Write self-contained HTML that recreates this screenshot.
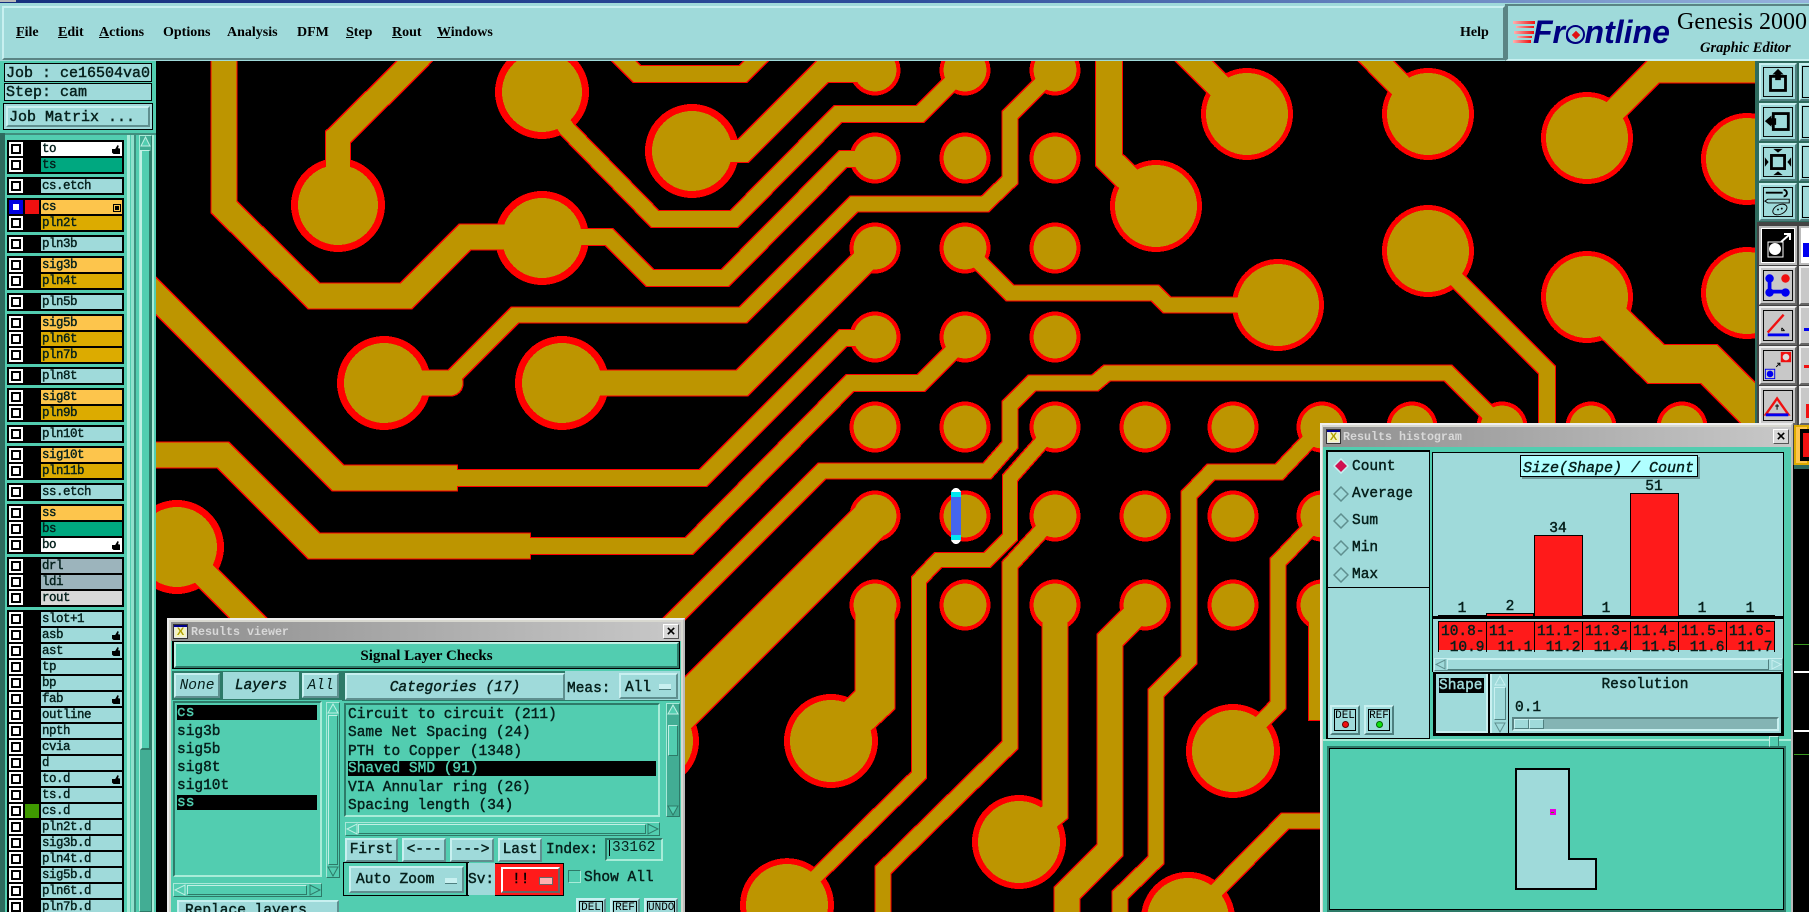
<!DOCTYPE html>
<html><head><meta charset="utf-8"><title>Genesis 2000</title>
<style>
html,body{margin:0;padding:0;width:1809px;height:912px;overflow:hidden;background:#000}
div{position:absolute;box-sizing:border-box;white-space:pre}
svg{position:absolute;display:block}
#root{left:0;top:0;width:1809px;height:912px;overflow:hidden;background:#000}
.m{font-family:"Liberation Mono",monospace;font-weight:normal;-webkit-text-stroke:.45px currentColor;font-size:14.5px;color:#06201c}
.s{font-family:"Liberation Serif",serif;font-weight:bold;font-size:14px;color:#000}
.u{background:#9fdada;border:2px solid;border-color:#c8f0f0 #5f8f8f #5f8f8f #c8f0f0;text-align:center}
.g{left:7px;width:117px;background:#000;padding-top:2px;overflow:hidden}
.g,.g div{white-space:normal}
.g div{position:relative}
.r{height:16px;width:117px}
.c{position:absolute!important;left:2px;top:0;width:14px;height:14px;background:#fff}
.c::after{content:"";position:absolute;left:2px;top:2px;width:10px;height:10px;box-sizing:border-box;border:2px solid #000;background:#fff}
.c.b{background:#0000e0}.c.b::after{border-color:#0000e0}
.l{position:absolute!important;left:34px;top:0;width:81px;height:14px;background:#9fdada;font:normal 12.5px/15px "Liberation Mono",monospace;-webkit-text-stroke:.4px #04201c;letter-spacing:-.5px;color:#04201c;padding-left:1px;overflow:hidden}
.w1{background:#fff}.w2{background:#00a880}.o1{background:#fdc54c}.o2{background:#dcab00}.gr{background:#9cb4bc}.lg{background:#d8d8d8}
.h{position:absolute!important;right:2px;top:3px;width:8px;height:9px;background:#000;clip-path:polygon(0 45%,40% 45%,70% 0,85% 10%,75% 35%,100% 40%,100% 100%,20% 100%,0 85%)}
.q{background:#9fdada;border:2px solid;border-color:#c8f0f0 #4f7f7f #4f7f7f #c8f0f0}
.q>svg{left:2px;top:2px;width:30px;height:30px}
.t{background:#c8c8c8;border:2px solid;border-color:#eee #666 #666 #eee}
.t>svg{left:2px;top:2px;width:30px;height:31px}
.ti{background:linear-gradient(90deg,#8f8f8f,#c8c8c8);color:#d8d8d8;font:bold 11.67px/18px "Liberation Mono",monospace}
.x{background:#d8d8d8;border:1px solid;border-color:#fff #555 #555 #fff;color:#000;font:bold 15px/13px "Liberation Sans",sans-serif;text-align:center}
.ic{background:#e8e8e8;border:1px solid #333}
.ic::before{content:"";position:absolute;left:0;top:0;width:13px;height:2px;background:#00008a}
.ic::after{content:"X";position:absolute;left:1px;top:3px;width:11px;height:9px;background:#f4f4c0;color:#b0a000;font:bold 11px/9px "Liberation Sans",sans-serif;text-align:center}
.sel{background:#000;color:#52cdb0}
.tr{background:#42ad94;border:1px solid;border-color:#a8e8d8 #2d7a68 #2d7a68 #a8e8d8}
.th{background:#52cdb0;border:1px solid;border-color:#c0f0e4 #2d7a68 #2d7a68 #c0f0e4}
.cell{top:621px;width:49px;height:31px;background:linear-gradient(#ff1a1a 28px,#9fdada 28px);overflow:hidden;border:1px solid #000;border-bottom:0;line-height:16px;padding:2px 0 0 2px}
</style></head>
<body>
<div id="root">
<!-- board -->
<svg style="left:156px;top:61px" width="1601" height="851" viewBox="156 61 1601 851" shape-rendering="crispEdges">
<defs><filter id="o" filterUnits="userSpaceOnUse" x="156" y="61" width="1601" height="851" color-interpolation-filters="sRGB">
<feMorphology in="SourceAlpha" operator="dilate" radius="1" result="d"/>
<feFlood flood-color="#ff0000"/><feComposite in2="d" operator="in" result="r"/>
<feMerge><feMergeNode in="r"/><feMergeNode in="SourceGraphic"/></feMerge></filter></defs>
<rect x="156" y="61" width="1601" height="851" fill="#000"/>
<g fill="#ff0000">
<circle cx="338" cy="205" r="47"/><circle cx="542" cy="92" r="47"/><circle cx="692" cy="151" r="47"/><circle cx="542" cy="238" r="47"/><circle cx="384" cy="383" r="47"/><circle cx="562" cy="383" r="47"/><circle cx="177" cy="547" r="47"/>
<circle cx="1247" cy="114" r="46"/><circle cx="1428" cy="114" r="46"/><circle cx="1587" cy="138" r="46"/><circle cx="1747" cy="159" r="46"/><circle cx="1156" cy="206" r="46"/><circle cx="1428" cy="251" r="46"/><circle cx="1278" cy="305" r="46"/><circle cx="1587" cy="297" r="46"/><circle cx="1747" cy="293" r="46"/>
<circle cx="831" cy="741" r="47"/><circle cx="1019" cy="842" r="47"/><circle cx="1233" cy="751" r="47"/><path d="M740.5 912A47 47 0 1 1 833.5 912Z"/><path d="M1141.5 912A47 47 0 0 1 1234.5 912Z"/><circle cx="652" cy="741" r="47"/>
<circle cx="875" cy="70" r="25.5"/><circle cx="875" cy="158" r="25.5"/><circle cx="875" cy="248" r="25.5"/><circle cx="875" cy="337" r="25.5"/><circle cx="875" cy="427" r="25.5"/><circle cx="875" cy="516" r="25.5"/><circle cx="875" cy="605" r="25.5"/>
<circle cx="965" cy="70" r="25.5"/><circle cx="965" cy="158" r="25.5"/><circle cx="965" cy="248" r="25.5"/><circle cx="965" cy="337" r="25.5"/><circle cx="965" cy="427" r="25.5"/><circle cx="965" cy="516" r="25.5"/><circle cx="965" cy="605" r="25.5"/>
<circle cx="1055" cy="70" r="25.5"/><circle cx="1055" cy="158" r="25.5"/><circle cx="1055" cy="248" r="25.5"/><circle cx="1055" cy="337" r="25.5"/><circle cx="1055" cy="427" r="25.5"/><circle cx="1055" cy="516" r="25.5"/><circle cx="1055" cy="605" r="25.5"/>
<circle cx="1145" cy="427" r="25.5"/><circle cx="1145" cy="516" r="25.5"/><circle cx="1145" cy="605" r="25.5"/>
<circle cx="1233" cy="427" r="25.5"/><circle cx="1233" cy="516" r="25.5"/><circle cx="1233" cy="605" r="25.5"/>
<circle cx="1322" cy="427" r="25.5"/><circle cx="1322" cy="516" r="25.5"/><circle cx="1322" cy="605" r="25.5"/>
<circle cx="1412" cy="427" r="25.5"/><circle cx="1502" cy="427" r="25.5"/><circle cx="1591" cy="427" r="25.5"/><circle cx="1682" cy="427" r="25.5"/>
</g>
<g filter="url(#o)">
<g fill="none" stroke="#bd9500" stroke-linejoin="miter">
<polyline stroke-width="25" points="224,50 224,207 314,296 406,296 465,237 542,237"/>
<polyline stroke-width="24" points="338,205 338,137 415,61 425,50"/>
<polyline stroke-width="16" points="542,92 567,129 655,219 734,219 838,114 920,114 965,69"/>
<polyline stroke-width="16" points="609,46 637,74 743,74 771,46"/>
<polyline stroke-width="22" points="692,151 743,151 823,71 875,71"/>
<polyline stroke-width="16" points="875,159 843,159 725,278 650,278 609,237 542,237"/>
<polyline stroke-width="15" points="1055,70 1010,115 1010,180 985,204 854,204 743,315 515,315 452,378"/>
<polyline stroke-width="25" stroke-linecap="round" points="384,383 450,383"/>
<polyline stroke-width="25" points="562,383 742,383 864,261 875,250"/>
<polyline stroke-width="16" points="875,338 843,338 703,478 457,478"/>
<polyline stroke-width="25" points="457,478 338,478 145,285"/>
<polyline stroke-width="25" points="145,455 223,455 314,546 530,546"/>
<polyline stroke-width="16" points="530,546 689,546 850,383 921,383 965,339"/>
<polyline stroke-width="25" points="177,547 270,640"/>
<polyline stroke-width="26" points="1109,50 1109,160 1156,206"/>
<polyline stroke-width="25" points="1183,50 1194,61 1247,114"/>
<polyline stroke-width="24" points="1365,50 1376,61 1428,114"/>
<polyline stroke-width="23" points="1587,138 1654,71 1770,71"/>
<polyline stroke-width="15" points="965,248 1010,293 1155,293 1167,305 1278,305"/>
<polyline stroke-width="16" points="1428,251 1547,370 1547,440"/>
<polyline stroke-width="38" points="1587,297 1656,364 1709,364 1770,425"/>
<polyline stroke-width="15" points="1502,427 1448,373 1107,373 1095,383 1032,383 1010,405 1010,445 987,471 822,471 600,693"/>
<polyline stroke-width="14" points="1055,427 1010,478 1010,537 987,560 938,560 919,580 919,775 787,905"/>
<polyline stroke-width="15" points="1055,516 1010,565 1010,745 883,870 883,912"/>
<polyline stroke-width="40" points="875,516 652,739"/>
<polyline stroke-width="39" points="875,605 875,700 831,741"/>
<polyline stroke-width="25" points="1055,605 1055,812 1019,842"/>
<polyline stroke-width="25" points="1145,605 1110,640 1110,850 1067,893 1067,912"/>
<polyline stroke-width="15" points="1322,427 1279,472 1211,472 1189,495 1189,660 1156,693 1156,860 1120,895 1120,912"/>
<polyline stroke-width="15" points="1322,516 1278,562 1278,705 1233,751"/>
<polyline stroke-width="26" points="1322,605 1322,720"/>
<polyline stroke-width="15" points="1195,912 1285,821 1330,821"/>
</g>
<g fill="#bd9500">
<circle cx="338" cy="205" r="40"/><circle cx="542" cy="92" r="40"/><circle cx="692" cy="151" r="40"/><circle cx="542" cy="238" r="40"/><circle cx="384" cy="383" r="40"/><circle cx="562" cy="383" r="40"/><circle cx="177" cy="547" r="40"/>
<circle cx="1247" cy="114" r="41"/><circle cx="1428" cy="114" r="41"/><circle cx="1587" cy="138" r="41"/><circle cx="1747" cy="159" r="41"/><circle cx="1156" cy="206" r="41"/><circle cx="1428" cy="251" r="41"/><circle cx="1278" cy="305" r="41"/><circle cx="1587" cy="297" r="41"/><circle cx="1747" cy="293" r="41"/>
<circle cx="831" cy="741" r="41"/><circle cx="1019" cy="842" r="41"/><circle cx="1233" cy="751" r="41"/><path d="M746.6 912A41 41 0 1 1 827.4 912Z"/><path d="M1147.6 912A41 41 0 0 1 1228.4 912Z"/><circle cx="652" cy="741" r="41"/>
<circle cx="875" cy="70" r="21.5"/><circle cx="875" cy="158" r="21.5"/><circle cx="875" cy="248" r="21.5"/><circle cx="875" cy="337" r="21.5"/><circle cx="875" cy="427" r="21.5"/><circle cx="875" cy="516" r="21.5"/><circle cx="875" cy="605" r="21.5"/>
<circle cx="965" cy="70" r="21.5"/><circle cx="965" cy="158" r="21.5"/><circle cx="965" cy="248" r="21.5"/><circle cx="965" cy="337" r="21.5"/><circle cx="965" cy="427" r="21.5"/><circle cx="965" cy="516" r="21.5"/><circle cx="965" cy="605" r="21.5"/>
<circle cx="1055" cy="70" r="21.5"/><circle cx="1055" cy="158" r="21.5"/><circle cx="1055" cy="248" r="21.5"/><circle cx="1055" cy="337" r="21.5"/><circle cx="1055" cy="427" r="21.5"/><circle cx="1055" cy="516" r="21.5"/><circle cx="1055" cy="605" r="21.5"/>
<circle cx="1145" cy="427" r="21.5"/><circle cx="1145" cy="516" r="21.5"/><circle cx="1145" cy="605" r="21.5"/>
<circle cx="1233" cy="427" r="21.5"/><circle cx="1233" cy="516" r="21.5"/><circle cx="1233" cy="605" r="21.5"/>
<circle cx="1322" cy="427" r="21.5"/><circle cx="1322" cy="516" r="21.5"/><circle cx="1322" cy="605" r="21.5"/>
<circle cx="1412" cy="427" r="21.5"/><circle cx="1502" cy="427" r="21.5"/><circle cx="1591" cy="427" r="21.5"/><circle cx="1682" cy="427" r="21.5"/>
</g>
</g>
<rect x="951" y="488" width="10" height="56" rx="5" fill="#fff"/>
<rect x="951" y="492" width="10" height="48" fill="#00e8f0"/>
<rect x="951" y="497" width="10" height="38" fill="#4466ee"/>
</svg>

<!-- top -->
<div style="left:0;top:0;width:1809px;height:6px;background:linear-gradient(90deg,#15307e,#2e4e9c 50%,#96b2dc)"></div>
<div style="left:0;top:0;width:16px;height:2px;background:#b8b8b8"></div>
<div style="left:0;top:3px;width:1809px;height:58px;background:#9fdada"></div>
<div style="left:2px;top:6px;width:1503px;height:54px;background:#9fdada;border:2px solid;border-color:#c8f0f0 #5a8484 #5a8484 #c8f0f0"></div>
<div style="left:1505px;top:4px;width:304px;height:57px;background:#9fdada;border-left:3px solid #5a8484;border-top:2px solid #5a8484;border-bottom:2px solid #c8f0f0"></div>
<div class="s" style="left:16px;top:25px"><u>F</u>ile</div>
<div class="s" style="left:58px;top:25px"><u>E</u>dit</div>
<div class="s" style="left:99px;top:25px"><u>A</u>ctions</div>
<div class="s" style="left:163px;top:25px">Options</div>
<div class="s" style="left:227px;top:25px">Analysis</div>
<div class="s" style="left:297px;top:25px">DFM</div>
<div class="s" style="left:346px;top:25px"><u>S</u>tep</div>
<div class="s" style="left:392px;top:25px"><u>R</u>out</div>
<div class="s" style="left:437px;top:25px"><u>W</u>indows</div>
<div class="s" style="left:1460px;top:25px">Help</div>
<!-- logo -->
<div style="left:1513px;top:21px;width:22px;height:3px;background:linear-gradient(90deg,#ffb0b0,#f01010)"></div>
<div style="left:1516px;top:26px;width:18px;height:2px;background:linear-gradient(90deg,#ffb0b0,#f01010)"></div>
<div style="left:1514px;top:31px;width:20px;height:3px;background:linear-gradient(90deg,#ffb0b0,#f01010)"></div>
<div style="left:1517px;top:36px;width:15px;height:2px;background:linear-gradient(90deg,#ffb0b0,#f01010)"></div>
<div style="left:1513px;top:40px;width:18px;height:3px;background:linear-gradient(90deg,#ffb0b0,#f01010)"></div>
<div style="left:1533px;top:14px;font:italic bold 32px/36px 'Liberation Sans',sans-serif;color:#000080;letter-spacing:0">Frontline</div>
<div style="left:1566px;top:25px;width:19px;height:19px;border-radius:50%;background:#9fdada;border:2.5px solid #000080"></div>
<div style="left:1572.5px;top:31.5px;width:6px;height:6px;background:#e01010;transform:rotate(45deg)"></div>
<div style="left:1677px;top:8px;font:24px/28px 'Liberation Serif',serif;color:#000">Genesis 2000</div>
<div style="left:1700px;top:39px;font:italic bold 14.5px/18px 'Liberation Serif',serif;color:#000">Graphic Editor</div>

<!-- left panel -->
<div style="left:0;top:61px;width:156px;height:851px;background:#52cdb0"></div>
<div style="left:0;top:133px;width:5px;height:779px;background:#2e6b5e"></div>
<div style="left:5px;top:133px;width:151px;height:2px;background:#3f8f7e"></div>
<div style="left:4px;top:63px;width:148px;height:19px;background:#9fdada;border:1px solid #000"></div>
<div style="left:4px;top:83px;width:148px;height:18px;background:#9fdada;border:1px solid #000"></div>
<div class="m" style="left:6px;top:64px;font-size:15px;line-height:19px">Job : ce16504va0</div>
<div class="m" style="left:6px;top:83px;font-size:15px;line-height:20px">Step: cam</div>
<div style="left:3px;top:103px;width:150px;height:27px;background:#9fdada;border:1px solid #000"></div>
<div class="u" style="left:6px;top:106px;width:144px;height:21px"></div>
<div class="m" style="left:9px;top:108px;font-size:15px;line-height:19px">Job Matrix ...</div>

<div class="g" style="top:140px;height:34px"><div class="r"><i class="c"></i><div class="l w1">to<i class="h"></i></div></div><div class="r"><i class="c"></i><div class="l w2">ts</div></div></div>
<div class="g" style="top:177px;height:18px"><div class="r"><i class="c"></i><div class="l">cs.etch</div></div></div>
<div class="g" style="top:198px;height:34px"><div class="r"><i class="c b"></i><div style="position:absolute;left:18px;top:0;width:14px;height:14px;background:#f01010"></div><div class="l o1">cs<span style="position:absolute;right:1px;top:4px;width:6px;height:6px;background:#000;border:1px solid #000;box-shadow:inset 0 0 0 1px #fdc54c"></span></div></div><div class="r"><i class="c"></i><div class="l o2">pln2t</div></div></div>
<div class="g" style="top:235px;height:18px"><div class="r"><i class="c"></i><div class="l">pln3b</div></div></div>
<div class="g" style="top:256px;height:34px"><div class="r"><i class="c"></i><div class="l o1">sig3b</div></div><div class="r"><i class="c"></i><div class="l o2">pln4t</div></div></div>
<div class="g" style="top:293px;height:18px"><div class="r"><i class="c"></i><div class="l">pln5b</div></div></div>
<div class="g" style="top:314px;height:50px"><div class="r"><i class="c"></i><div class="l o1">sig5b</div></div><div class="r"><i class="c"></i><div class="l o2">pln6t</div></div><div class="r"><i class="c"></i><div class="l o2">pln7b</div></div></div>
<div class="g" style="top:367px;height:18px"><div class="r"><i class="c"></i><div class="l">pln8t</div></div></div>
<div class="g" style="top:388px;height:34px"><div class="r"><i class="c"></i><div class="l o1">sig8t</div></div><div class="r"><i class="c"></i><div class="l o2">pln9b</div></div></div>
<div class="g" style="top:425px;height:18px"><div class="r"><i class="c"></i><div class="l">pln10t</div></div></div>
<div class="g" style="top:446px;height:34px"><div class="r"><i class="c"></i><div class="l o1">sig10t</div></div><div class="r"><i class="c"></i><div class="l o2">pln11b</div></div></div>
<div class="g" style="top:483px;height:18px"><div class="r"><i class="c"></i><div class="l">ss.etch</div></div></div>
<div class="g" style="top:504px;height:50px"><div class="r"><i class="c"></i><div class="l o1">ss</div></div><div class="r"><i class="c"></i><div class="l w2">bs</div></div><div class="r"><i class="c"></i><div class="l w1">bo<i class="h"></i></div></div></div>
<div class="g" style="top:557px;height:50px"><div class="r"><i class="c"></i><div class="l gr">drl</div></div><div class="r"><i class="c"></i><div class="l gr">ldi</div></div><div class="r"><i class="c"></i><div class="l lg">rout</div></div></div>
<div class="g" style="top:610px;height:302px">
<div class="r"><i class="c"></i><div class="l">slot+1</div></div>
<div class="r"><i class="c"></i><div class="l">asb<i class="h"></i></div></div>
<div class="r"><i class="c"></i><div class="l">ast<i class="h"></i></div></div>
<div class="r"><i class="c"></i><div class="l">tp</div></div>
<div class="r"><i class="c"></i><div class="l">bp</div></div>
<div class="r"><i class="c"></i><div class="l">fab<i class="h"></i></div></div>
<div class="r"><i class="c"></i><div class="l">outline</div></div>
<div class="r"><i class="c"></i><div class="l">npth</div></div>
<div class="r"><i class="c"></i><div class="l">cvia</div></div>
<div class="r"><i class="c"></i><div class="l">d</div></div>
<div class="r"><i class="c"></i><div class="l">to.d<i class="h"></i></div></div>
<div class="r"><i class="c"></i><div class="l">ts.d</div></div>
<div class="r"><i class="c"></i><div style="position:absolute;left:18px;top:0;width:14px;height:14px;background:#3f9a00"></div><div class="l">cs.d</div></div>
<div class="r"><i class="c"></i><div class="l">pln2t.d</div></div>
<div class="r"><i class="c"></i><div class="l">sig3b.d</div></div>
<div class="r"><i class="c"></i><div class="l">pln4t.d</div></div>
<div class="r"><i class="c"></i><div class="l">sig5b.d</div></div>
<div class="r"><i class="c"></i><div class="l">pln6t.d</div></div>
<div class="r" style="height:12px"><i class="c" style="height:12px"></i><div class="l" style="height:12px">pln7b.d</div></div>
</div>
<div style="left:127px;top:135px;width:3px;height:777px;background:#a8ecd8"></div>
<div style="left:130px;top:135px;width:1px;height:777px;background:#52cdb0"></div>
<div style="left:131px;top:135px;width:3px;height:777px;background:#8fe0cc"></div>
<div style="left:134px;top:135px;width:2px;height:777px;background:#3d8f7e"></div>
<div style="left:139px;top:135px;width:13px;height:777px;background:#42ad94;border:1px solid;border-color:#a8ecd8 #2d7a68 #2d7a68 #a8ecd8"></div>
<div style="left:152px;top:135px;width:2px;height:777px;background:#a8ecd8"></div>
<div class="th" style="left:140px;top:150px;width:11px;height:600px;border-width:1px 2px 2px 2px"></div>
<svg style="left:140px;top:136px" width="11" height="12"><polygon points="5.5,1 10,10 1,10" fill="#52cdb0" stroke="#c0f0e4"/></svg>

<!-- toolbar -->
<div style="left:1755px;top:61px;width:54px;height:404px;background:#2e6b5e"></div>
<div style="left:1757px;top:222px;width:52px;height:243px;background:#444"></div>
<div class="q" style="left:1759px;top:63px;width:38px;height:38px"><svg viewBox="0 0 32 32"><rect x=".5" y=".5" width="31" height="31" fill="none" stroke="#000"/><rect x="8" y="10" width="16" height="15" fill="none" stroke="#000" stroke-width="3"/><polygon points="16,2 22,8 19,8 19,14 13,14 13,8 10,8" fill="#000"/></svg></div>
<div class="q" style="left:1759px;top:103px;width:38px;height:38px"><svg viewBox="0 0 32 32"><rect x=".5" y=".5" width="31" height="31" fill="none" stroke="#000"/><rect x="11" y="7" width="16" height="17" fill="none" stroke="#000" stroke-width="3"/><polygon points="2,15 9,9 9,12 14,12 14,19 9,19 9,21" fill="#000"/></svg></div>
<div class="q" style="left:1759px;top:143px;width:38px;height:38px"><svg viewBox="0 0 32 32"><rect x=".5" y=".5" width="31" height="31" fill="none" stroke="#000"/><rect x="9" y="9" width="14" height="14" fill="none" stroke="#000" stroke-width="3"/><polygon points="16,6 11,2 21,2" fill="#000"/><polygon points="16,26 11,30 21,30" fill="#000"/><polygon points="6,16 2,11 2,21" fill="#000"/><polygon points="26,16 30,11 30,21" fill="#000"/></svg></div>
<div class="q" style="left:1759px;top:183px;width:38px;height:38px"><svg viewBox="0 0 32 32"><rect x=".5" y=".5" width="31" height="31" fill="none" stroke="#000"/><path d="M3 6H21M22 3a3 3 0 1 1 0 7" fill="none" stroke="#000" stroke-width="2"/><path d="M5 13H28V17H5L2 15Z" fill="none" stroke="#000"/><ellipse cx="18" cy="24" rx="8" ry="5" transform="rotate(-25 18 24)" fill="none" stroke="#000"/><circle cx="16" cy="24" r="1"/><circle cx="20" cy="23" r="1"/></svg></div>
<div style="left:1759px;top:226px;width:38px;height:39px;background:#fff;border:2px solid #bbb"></div>
<svg style="left:1762px;top:229px" width="32" height="33" viewBox="0 0 32 33"><rect width="32" height="33" fill="#000"/><rect x="6" y="13" width="15" height="15" fill="none" stroke="#fff"/><circle cx="13" cy="20" r="6" fill="#fff"/><path d="M19 13L27 6M22 5H28V11" fill="none" stroke="#fff" stroke-width="2"/></svg>
<div class="t" style="left:1759px;top:266px;width:38px;height:39px"><svg viewBox="0 0 32 33"><rect x=".5" y=".5" width="31" height="32" fill="none" stroke="#000"/><path d="M7 9V23H22" stroke="#0000f0" stroke-width="4" fill="none"/><circle cx="7" cy="9" r="4.5" fill="#0000f0"/><circle cx="7" cy="24" r="4.5" fill="#0000f0"/><circle cx="24" cy="24" r="4.5" fill="#0000f0"/><circle cx="24" cy="9" r="4.5" fill="#f01010"/></svg></div>
<div class="t" style="left:1759px;top:306px;width:38px;height:39px"><svg viewBox="0 0 32 33"><rect x=".5" y=".5" width="31" height="32" fill="none" stroke="#000"/><path d="M5 24L22 5" stroke="#f01010" stroke-width="2.5"/><rect x="5" y="25" width="23" height="3" fill="#0000f0"/><path d="M20 19l3 3M20 19v3h3" stroke="#000" fill="none"/></svg></div>
<div class="t" style="left:1759px;top:346px;width:38px;height:39px"><svg viewBox="0 0 32 33"><rect x=".5" y=".5" width="31" height="32" fill="none" stroke="#000"/><rect x="19" y="2" width="11" height="11" fill="#f01010"/><circle cx="24.5" cy="7.5" r="3.5" fill="#ddd"/><rect x="2.5" y="20.5" width="10" height="10" fill="none" stroke="#0000f0"/><circle cx="7.5" cy="25.5" r="3.5" fill="#0000f0"/><path d="M14 18l4-4M15 14h3v3" stroke="#000" fill="none"/></svg></div>
<div class="t" style="left:1759px;top:386px;width:38px;height:39px"><svg viewBox="0 0 32 33"><rect x=".5" y=".5" width="31" height="32" fill="none" stroke="#000"/><path d="M3 26L15 9L27 26Z" fill="none" stroke="#f01010" stroke-width="2.5"/><rect x="3" y="25" width="24" height="3" fill="#0000f0"/><path d="M15 15v6M13 17h4" stroke="#000"/></svg></div>
<div class="q" style="left:1799px;top:63px;width:10px;height:38px;border-right:0"></div>
<div class="q" style="left:1799px;top:103px;width:10px;height:38px;border-right:0"></div>
<div class="q" style="left:1799px;top:143px;width:10px;height:38px;border-right:0"></div>
<div class="q" style="left:1799px;top:183px;width:10px;height:38px;border-right:0"></div>
<div style="left:1802px;top:66px;width:7px;height:32px;border:1px solid #000;border-right:0"></div>
<div style="left:1802px;top:106px;width:7px;height:32px;border:1px solid #000;border-right:0"></div>
<div style="left:1802px;top:146px;width:7px;height:32px;border:1px solid #000;border-right:0"></div>
<div style="left:1802px;top:186px;width:7px;height:32px;border:1px solid #000;border-right:0"></div>
<div style="left:1799px;top:226px;width:10px;height:39px;background:#fff;border:2px solid #bbb;border-right:0"></div>
<div style="left:1803px;top:243px;width:6px;height:14px;background:#0000f0"></div>
<div class="t" style="left:1799px;top:266px;width:10px;height:39px;border-right:0"></div>
<div class="t" style="left:1799px;top:306px;width:10px;height:39px;border-right:0"></div>
<div class="t" style="left:1799px;top:346px;width:10px;height:39px;border-right:0"></div>
<div class="t" style="left:1799px;top:386px;width:10px;height:39px;border-right:0"></div>
<div style="left:1804px;top:328px;width:5px;height:3px;background:#0000f0"></div>
<div style="left:1804px;top:365px;width:5px;height:3px;background:#f01010"></div>
<div style="left:1806px;top:404px;width:3px;height:14px;background:#f01010"></div>
<div style="left:1794px;top:425px;width:15px;height:40px;background:#fdc54c;border:2px solid #dcab00;padding:0"></div>
<div style="left:1800px;top:429px;width:9px;height:32px;background:#000"></div>
<div style="left:1803px;top:433px;width:6px;height:24px;background:#f01010"></div>
<div style="left:1794px;top:465px;width:15px;height:4px;background:#2e6b5e"></div>
<div style="left:1794px;top:644px;width:15px;height:1px;background:#3a9a20"></div>
<div style="left:1794px;top:671px;width:15px;height:2px;background:#fff"></div>
<div style="left:1794px;top:730px;width:15px;height:2px;background:#fff"></div>
<div style="left:1794px;top:754px;width:15px;height:1px;background:#3a9a20"></div>

<!-- results viewer -->
<div style="left:167px;top:618px;width:518px;height:294px;background:#d8d8d0;border:2px solid #eee;border-right-color:#bbb;border-bottom:0"></div>
<div style="left:171px;top:622px;width:510px;height:290px;background:#52cdb0"></div>
<div class="ti" style="left:171px;top:622px;width:510px;height:19px;padding-left:20px;line-height:20px">Results viewer</div>
<div class="ic" style="left:173px;top:624px;width:15px;height:15px"></div>
<div class="x" style="left:663px;top:624px;width:16px;height:15px">×</div>
<div style="left:172px;top:641px;width:508px;height:28px;background:#000"></div>
<div style="left:174px;top:642px;width:505px;height:26px;background:#52cdb0;border:2px solid;border-color:#c0f0e4 #2d7a68 #2d7a68 #c0f0e4"></div>
<div style="left:174px;top:646px;width:505px;text-align:center;font:bold 15px/20px 'Liberation Serif',serif;color:#000">Signal Layer Checks</div>

<div style="left:172px;top:671px;width:170px;height:29px;background:#2d7a68"></div>
<div class="u m" style="left:174px;top:673px;width:46px;height:25px;font-style:italic;-webkit-text-stroke:0;line-height:23px">None</div>
<div class="m" style="left:223px;top:672px;width:76px;height:27px;background:#9fdada;font-style:italic;line-height:28px;text-align:center">Layers</div>
<div class="u m" style="left:302px;top:673px;width:37px;height:25px;font-style:italic;-webkit-text-stroke:0;line-height:23px">All</div>
<div style="left:173px;top:701px;width:149px;height:176px;background:#52cdb0;border:2px solid;border-color:#2d7a68 #a8ecd8 #a8ecd8 #2d7a68"></div>
<div class="m sel" style="left:177px;top:705px;width:140px;height:15px;line-height:17px;overflow:hidden">cs</div>
<div class="m" style="left:177px;top:723px;line-height:18px">sig3b</div>
<div class="m" style="left:177px;top:741px;line-height:18px">sig5b</div>
<div class="m" style="left:177px;top:759px;line-height:18px">sig8t</div>
<div class="m" style="left:177px;top:777px;line-height:18px">sig10t</div>
<div class="m sel" style="left:177px;top:795px;width:140px;height:15px;line-height:17px;overflow:hidden">ss</div>
<div class="tr" style="left:326px;top:702px;width:14px;height:176px;background:#52cdb0"></div>
<div class="th" style="left:328px;top:715px;width:10px;height:150px"></div>
<svg style="left:327px;top:703px" width="12" height="11"><polygon points="6,1 11,10 1,10" fill="#52cdb0" stroke="#c0f0e4"/></svg>
<svg style="left:327px;top:866px" width="12" height="11"><polygon points="6,10 11,1 1,1" fill="#52cdb0" stroke="#2d7a68"/></svg>
<div class="tr" style="left:173px;top:883px;width:149px;height:14px;background:#52cdb0"></div>
<div class="th" style="left:187px;top:885px;width:120px;height:10px"></div>
<svg style="left:174px;top:884px" width="12" height="12"><polygon points="1,6 11,1 11,11" fill="#52cdb0" stroke="#c0f0e4"/></svg>
<svg style="left:309px;top:884px" width="12" height="12"><polygon points="11,6 1,1 1,11" fill="#52cdb0" stroke="#2d7a68"/></svg>
<div class="u" style="left:177px;top:900px;width:162px;height:12px;border-bottom:0"></div>
<div class="m" style="left:185px;top:902px;height:10px;line-height:18px;overflow:hidden">Replace layers</div>

<div style="left:342px;top:671px;width:338px;height:30px;background:#2d7a68"></div>
<div style="left:565px;top:671px;width:115px;height:29px;background:#9fdada"></div>
<div class="u m" style="left:345px;top:673px;width:220px;height:27px;font-style:italic;line-height:27px">Categories (17)</div>
<div class="m" style="left:567px;top:679px;line-height:20px">Meas:</div>
<div class="u m" style="left:619px;top:673px;width:59px;height:26px;text-align:left;padding-left:4px;line-height:26px">All<span style="position:absolute;right:5px;top:9px;width:12px;height:5px;background:#c8f0f0;border-bottom:1px solid #4f7f7f"></span></div>
<div style="left:344px;top:703px;width:316px;height:114px;background:#52cdb0;border:2px solid;border-color:#2d7a68 #a8ecd8 #a8ecd8 #2d7a68"></div>
<div class="m" style="left:348px;top:706px;line-height:18px">Circuit to circuit (211)</div>
<div class="m" style="left:348px;top:724px;line-height:18px">Same Net Spacing (24)</div>
<div class="m" style="left:348px;top:743px;line-height:18px">PTH to Copper (1348)</div>
<div class="m sel" style="left:348px;top:761px;width:308px;height:15px;line-height:17px;overflow:hidden">Shaved SMD (91)</div>
<div class="m" style="left:348px;top:779px;line-height:18px">VIA Annular ring (26)</div>
<div class="m" style="left:348px;top:797px;line-height:18px">Spacing length (34)</div>
<div class="tr" style="left:666px;top:703px;width:14px;height:114px"></div>
<div class="th" style="left:668px;top:725px;width:10px;height:31px"></div>
<svg style="left:667px;top:704px" width="12" height="11"><polygon points="6,1 11,10 1,10" fill="#52cdb0" stroke="#c0f0e4"/></svg>
<svg style="left:667px;top:805px" width="12" height="11"><polygon points="6,10 11,1 1,1" fill="#52cdb0" stroke="#2d7a68"/></svg>
<div class="tr" style="left:345px;top:822px;width:315px;height:14px;background:#52cdb0"></div>
<div class="th" style="left:358px;top:824px;width:288px;height:10px"></div>
<svg style="left:346px;top:823px" width="12" height="12"><polygon points="1,6 11,1 11,11" fill="#52cdb0" stroke="#c0f0e4"/></svg>
<svg style="left:647px;top:823px" width="12" height="12"><polygon points="11,6 1,1 1,11" fill="#52cdb0" stroke="#2d7a68"/></svg>
<div class="u m" style="left:345px;top:838px;width:53px;height:24px;line-height:21px">First</div>
<div class="u m" style="left:402px;top:838px;width:44px;height:24px;line-height:21px">&lt;---</div>
<div class="u m" style="left:450px;top:838px;width:44px;height:24px;line-height:21px">---&gt;</div>
<div class="u m" style="left:498px;top:838px;width:44px;height:24px;line-height:21px">Last</div>
<div class="m" style="left:546px;top:840px;line-height:20px">Index:</div>
<div class="m" style="left:605px;top:838px;width:58px;height:23px;background:#52cdb0;border:2px solid;border-color:#2d7a68 #a8ecd8 #a8ecd8 #2d7a68;padding-left:5px;line-height:16px;-webkit-text-stroke:0">33162</div>
<div style="left:609px;top:840px;width:1px;height:16px;background:#000"></div>
<div style="left:343px;top:862px;width:126px;height:34px;background:#000"></div>
<div style="left:344px;top:863px;width:122px;height:32px;background:#52cdb0"></div>
<div class="u m" style="left:349px;top:866px;width:115px;height:27px;text-align:left;padding-left:5px;line-height:25px">Auto Zoom<span style="position:absolute;right:5px;top:10px;width:12px;height:5px;background:#c8f0f0;border-bottom:1px solid #4f7f7f"></span></div>
<div class="m" style="left:468px;top:863px;width:28px;height:32px;background:#9fdada;line-height:34px">Sv:</div>
<div style="left:495px;top:863px;width:69px;height:33px;background:#ff1a1a;border:1px solid #000;border-left:0"></div>
<div class="m" style="left:501px;top:867px;width:59px;height:26px;background:#ff1a1a;border:2px solid;border-color:#fff #666 #666 #fff;line-height:22px;padding-left:9px;color:#000">!!<span style="position:absolute;right:5px;top:8px;width:12px;height:6px;background:#ffb0b0;border:1px solid #666"></span></div>
<div style="left:568px;top:870px;width:13px;height:13px;background:#52cdb0;border:1px solid;border-color:#2d7a68 #a8ecd8 #a8ecd8 #2d7a68"></div>
<div class="m" style="left:584px;top:868px;line-height:20px">Show All</div>
<div class="u" style="left:576px;top:898px;width:30px;height:14px;border-bottom:0"></div>
<div class="u" style="left:610px;top:898px;width:30px;height:14px;border-bottom:0"></div>
<div class="u" style="left:644px;top:898px;width:34px;height:14px;border-bottom:0"></div>
<div style="left:579px;top:901px;width:24px;height:11px;border:1px solid #000;border-bottom:0;overflow:hidden;font:11px/12px 'Liberation Mono',monospace;text-align:center;color:#000">DEL</div>
<div style="left:613px;top:901px;width:24px;height:11px;border:1px solid #000;border-bottom:0;overflow:hidden;font:11px/12px 'Liberation Mono',monospace;text-align:center;color:#000">REF</div>
<div style="left:647px;top:901px;width:28px;height:11px;border:1px solid #000;border-bottom:0;overflow:hidden;font:11px/12px 'Liberation Mono',monospace;text-align:center;color:#000">UNDO</div>

<!-- results histogram -->
<div style="left:1320px;top:423px;width:473px;height:489px;background:#d8d8d0;border:2px solid #eee;border-right-color:#bbb;border-bottom:0"></div>
<div style="left:1323px;top:427px;width:468px;height:485px;background:#52cdb0"></div>
<div class="ti" style="left:1323px;top:427px;width:468px;height:20px;padding-left:20px;line-height:21px">Results histogram</div>
<div class="ic" style="left:1326px;top:429px;width:15px;height:15px"></div>
<div class="x" style="left:1773px;top:429px;width:16px;height:15px">×</div>
<div style="left:1326px;top:450px;width:104px;height:289px;background:#9fdada;border:1px solid #000;border-width:2px 1px 1px 2px"></div>
<div style="left:1327px;top:587px;width:102px;height:1px;background:#000"></div>
<svg style="left:1333px;top:458px" width="16" height="16"><polygon points="8,1 15,8 8,15 1,8" fill="#d01050" stroke="#c8f0f0" stroke-width="1.5"/></svg>
<svg style="left:1333px;top:486px" width="16" height="16"><polygon points="8,1 15,8 8,15 1,8" fill="#9fdada" stroke="#5f8f8f" stroke-width="1.5"/></svg>
<svg style="left:1333px;top:513px" width="16" height="16"><polygon points="8,1 15,8 8,15 1,8" fill="#9fdada" stroke="#5f8f8f" stroke-width="1.5"/></svg>
<svg style="left:1333px;top:540px" width="16" height="16"><polygon points="8,1 15,8 8,15 1,8" fill="#9fdada" stroke="#5f8f8f" stroke-width="1.5"/></svg>
<svg style="left:1333px;top:567px" width="16" height="16"><polygon points="8,1 15,8 8,15 1,8" fill="#9fdada" stroke="#5f8f8f" stroke-width="1.5"/></svg>
<div class="m" style="left:1352px;top:458px;line-height:18px">Count</div>
<div class="m" style="left:1352px;top:485px;line-height:18px">Average</div>
<div class="m" style="left:1352px;top:512px;line-height:18px">Sum</div>
<div class="m" style="left:1352px;top:539px;line-height:18px">Min</div>
<div class="m" style="left:1352px;top:566px;line-height:18px">Max</div>
<div class="q" style="left:1330px;top:705px;width:30px;height:30px"></div>
<div class="q" style="left:1364px;top:705px;width:30px;height:30px"></div>
<div style="left:1334px;top:709px;width:22px;height:22px;border:1px solid #000;font:11px/12px 'Liberation Mono',monospace;text-align:center;color:#000">DEL</div>
<div style="left:1368px;top:709px;width:22px;height:22px;border:1px solid #000;font:11px/12px 'Liberation Mono',monospace;text-align:center;color:#000">REF</div>
<div style="left:1342px;top:721px;width:7px;height:7px;border-radius:50%;background:#f01010;border:1px solid #600"></div>
<div style="left:1376px;top:721px;width:7px;height:7px;border-radius:50%;background:#10e010;border:1px solid #060"></div>

<div style="left:1432px;top:452px;width:352px;height:220px;background:#9fdada;border-top:1px solid #000;border-left:1px solid #000;border-right:1px solid #000"></div>
<div style="left:1520px;top:455px;width:178px;height:22px;background:#b0ffff;border:1px solid;border-color:#fff #777 #777 #fff;box-shadow:2px 2px 0 #6f9a9a;outline:1px solid #000;outline-offset:-1px"></div>
<div class="m" style="left:1523px;top:459px;font-size:15px;font-style:italic;line-height:19px">Size(Shape) / Count</div>
<div style="left:1438px;top:615px;width:337px;height:2px;background:#000"></div>
<div style="left:1486px;top:613px;width:48px;height:4px;background:#ff1a1a;border:1px solid #000"></div>
<div style="left:1534px;top:535px;width:49px;height:82px;background:#ff1a1a;border:1px solid #000"></div>
<div style="left:1630px;top:493px;width:49px;height:124px;background:#ff1a1a;border:1px solid #000"></div>
<div style="left:1433px;top:616px;width:350px;height:3px;background:#000"></div>
<div class="m" style="left:1438px;top:600px;width:48px;line-height:18px;text-align:center">1</div>
<div class="m" style="left:1486px;top:598px;width:48px;line-height:18px;text-align:center">2</div>
<div class="m" style="left:1534px;top:520px;width:48px;line-height:18px;text-align:center">34</div>
<div class="m" style="left:1582px;top:600px;width:48px;line-height:18px;text-align:center">1</div>
<div class="m" style="left:1630px;top:478px;width:48px;line-height:18px;text-align:center">51</div>
<div class="m" style="left:1678px;top:600px;width:48px;line-height:18px;text-align:center">1</div>
<div class="m" style="left:1726px;top:600px;width:48px;line-height:18px;text-align:center">1</div>
<div class="m cell" style="left:1438px">10.8-
 10.9</div>
<div class="m cell" style="left:1486px">11-
 11.1</div>
<div class="m cell" style="left:1534px">11.1-
 11.2</div>
<div class="m cell" style="left:1582px">11.3-
 11.4</div>
<div class="m cell" style="left:1630px">11.4-
 11.5</div>
<div class="m cell" style="left:1678px">11.5-
 11.6</div>
<div class="m cell" style="left:1726px">11.6-
 11.7</div>
<div class="tr" style="left:1434px;top:658px;width:349px;height:13px;background:#9fdada;border-color:#c8f0f0 #5f8f8f #5f8f8f #c8f0f0"></div>
<div class="q" style="left:1447px;top:659px;width:322px;height:11px;border-width:1px"></div>
<svg style="left:1435px;top:659px" width="11" height="11"><polygon points="1,5.5 10,1 10,10" fill="#9fdada" stroke="#5f8f8f"/></svg>
<svg style="left:1771px;top:659px" width="11" height="11"><polygon points="10,5.5 1,1 1,10" fill="#9fdada" stroke="#c8f0f0"/></svg>
<div style="left:1433px;top:672px;width:351px;height:64px;background:#000"></div>
<div style="left:1436px;top:674px;width:52px;height:59px;background:#9fdada;border-right:2px solid #c8f0f0;border-bottom:2px solid #c8f0f0"></div>
<div class="m" style="left:1439px;top:678px;width:45px;height:15px;line-height:17px;background:#000;color:#9fdada;overflow:hidden">Shape</div>
<div style="left:1490px;top:674px;width:18px;height:59px;background:#9fdada;border-left:2px solid #c8f0f0"></div>
<div class="q" style="left:1494px;top:687px;width:12px;height:33px;border-width:1px"></div>
<svg style="left:1494px;top:675px" width="12" height="11"><polygon points="6,1 11,10 1,10" fill="#9fdada" stroke="#c8f0f0"/></svg>
<svg style="left:1494px;top:722px" width="12" height="11"><polygon points="6,10 11,1 1,1" fill="#9fdada" stroke="#5f8f8f"/></svg>
<div style="left:1509px;top:674px;width:272px;height:59px;background:#9fdada"></div>
<div class="m" style="left:1509px;top:676px;width:272px;line-height:18px;text-align:center;padding-right:0">Resolution</div>
<div class="m" style="left:1515px;top:699px;line-height:18px">0.1</div>
<div style="left:1512px;top:717px;width:267px;height:14px;background:#84b4b4;border:1px solid;border-color:#5a8484 #c8f0f0 #c8f0f0 #5a8484;border-width:2px"></div>
<div class="q" style="left:1514px;top:719px;width:15px;height:10px;border-width:1px"></div>
<div class="q" style="left:1529px;top:719px;width:15px;height:10px;border-width:1px"></div>
<div style="left:1323px;top:739px;width:468px;height:2px;background:#a8ecd8"></div>
<div style="left:1327px;top:746px;width:459px;height:166px;background:#2d7a68"></div>
<div style="left:1329px;top:748px;width:455px;height:162px;background:#52cdb0;border:1px solid #000"></div>
<div class="th" style="left:1769px;top:736px;width:10px;height:11px"></div>
<svg style="left:1329px;top:748px" width="455" height="162" viewBox="1329 748 455 162"><polygon points="1516,769 1569,769 1569,859 1596,859 1596,889 1516,889" fill="#9fdada" stroke="#000" stroke-width="2"/><rect x="1550" y="809" width="6" height="6" fill="#e800e0"/><rect x="1551" y="812" width="3" height="1" fill="#40a000"/></svg>
</div>
</body></html>
